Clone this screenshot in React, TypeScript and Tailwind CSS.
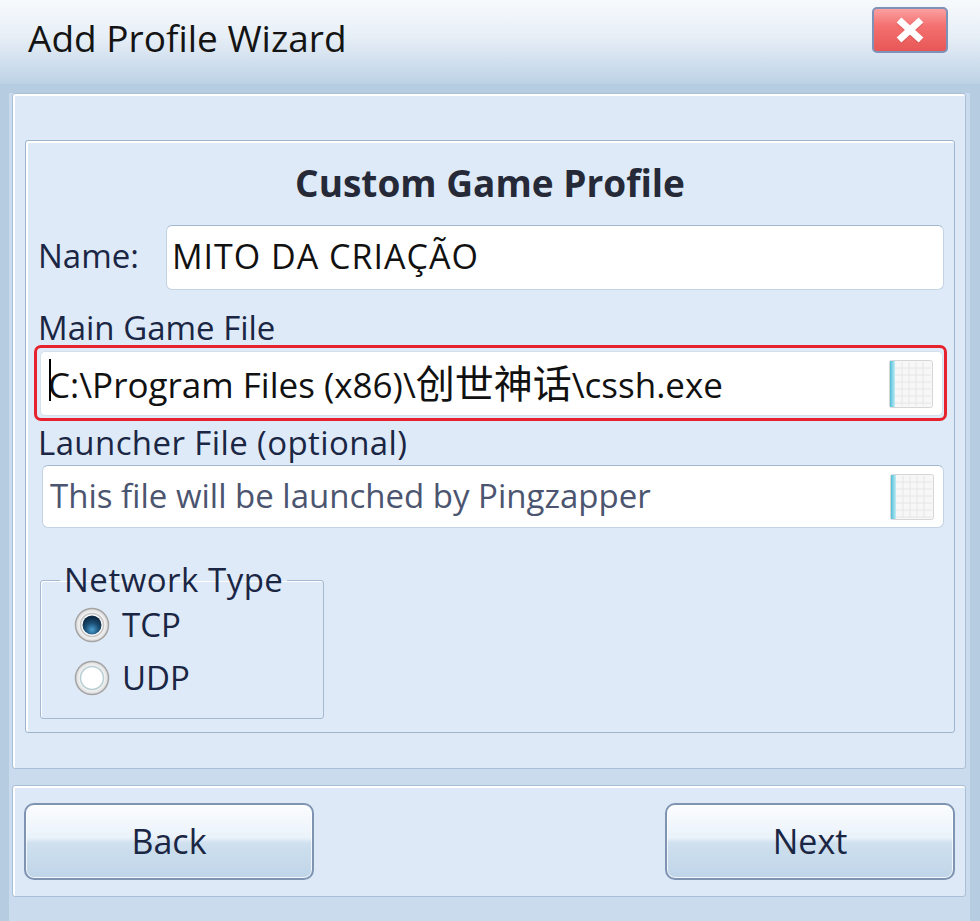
import React from "react";

const BrowseIcon = ({ h, id }: { h: number; id: string }) => {
  const vs = [13, 20, 27, 34];
  const hs: number[] = [];
  for (let y = 8; y < h - 2; y += 7) hs.push(y);
  return (
    <svg width="44" height={h} viewBox={`0 0 44 ${h}`} className="shrink-0">
      <defs>
        <linearGradient id={id} x1="0" y1="0" x2="1" y2="0">
          <stop offset="0" stopColor="#4fbfd9" />
          <stop offset="1" stopColor="#c2ebf3" />
        </linearGradient>
      </defs>
      <rect x="0.5" y="0.5" width="43" height={h - 1} rx="2" fill="#f7f7f7" stroke="#d6d6d6" />
      {vs.map((x) => (
        <line key={"v" + x} x1={x} y1="2" x2={x} y2={h - 2} stroke="#e6e6e6" strokeWidth="1" />
      ))}
      {hs.map((y) => (
        <line key={"h" + y} x1="6" y1={y} x2="42" y2={y} stroke="#e6e6e6" strokeWidth="1" />
      ))}
      <rect x="1" y="1" width="5" height={h - 2} fill={`url(#${id})`} />
    </svg>
  );
};

const Radio = ({ checked, id }: { checked: boolean; id: string }) => (
  <svg width="36" height="36" viewBox="0 0 36 36" className="shrink-0">
    <defs>
      <radialGradient id={id + "o"} cx="50%" cy="50%" r="50%">
        <stop offset="0" stopColor="#ffffff" />
        <stop offset="0.75" stopColor="#f3f3f3" />
        <stop offset="1" stopColor="#d9d9d9" />
      </radialGradient>
      <radialGradient id={id + "d"} cx="50%" cy="75%" r="65%">
        <stop offset="0" stopColor="#4c9fd2" />
        <stop offset="0.55" stopColor="#1b4e76" />
        <stop offset="1" stopColor="#0e2a44" />
      </radialGradient>
    </defs>
    <circle cx="18" cy="18" r="16.5" fill={`url(#${id}o)`} stroke="#a4a4a4" strokeWidth="1.5" />
    <circle cx="18" cy="18" r="11.5" fill="#ffffff" stroke={checked ? "#c4c4c4" : "#b9cfd3"} strokeWidth="1.5" />
    {checked && <circle cx="18" cy="18" r="9.5" fill={`url(#${id}d)`} />}
  </svg>
);

const WinButton = ({ label }: { label: string }) => (
  <div className="w-[290px] h-[77px] rounded-[10px] border-2 border-[#7f94b3] bg-[linear-gradient(180deg,#fbfdff_0%,#eaf2fa_45%,#cfe0ef_52%,#bfd5e8_100%)] shadow-[inset_0_0_0_1px_rgba(255,255,255,0.75)] flex items-center justify-center">
    <span className="text-[34px] leading-[36px] text-[#1a2644] pb-[2px]">{label}</span>
  </div>
);

export default function App() {
  return (
    <div className="w-[980px] h-[921px] flex flex-col bg-[#cadbed] font-['Open_Sans','Noto_Sans','Noto_Sans_CJK_SC',sans-serif] overflow-hidden">
      {/* Title bar */}
      <div className="h-[84px] shrink-0 flex items-start justify-between bg-[linear-gradient(180deg,#f7fafd_0%,#e6eef6_45%,#bdd2e6_100%)]">
        <div className="pl-[28px] pt-[18px] text-[37px] leading-[40px] text-[#141414]">Add Profile Wizard</div>
        <div className="mt-[7px] mr-[32px] w-[76px] h-[46px] rounded-[5px] border-2 border-[#7e91b6] bg-[linear-gradient(180deg,#fba0a0_0%,#f47070_40%,#e85757_100%)] flex items-center justify-center">
          <svg width="30" height="26" viewBox="0 0 30 26">
            <line x1="4" y1="3" x2="26" y2="23" stroke="#b94040" strokeWidth="7.5" opacity="0.35" transform="translate(0 1)" />
            <line x1="26" y1="3" x2="4" y2="23" stroke="#b94040" strokeWidth="7.5" opacity="0.35" transform="translate(0 1)" />
            <line x1="4" y1="3" x2="26" y2="23" stroke="#ffffff" strokeWidth="7" />
            <line x1="26" y1="3" x2="4" y2="23" stroke="#ffffff" strokeWidth="7" />
          </svg>
        </div>
      </div>

      {/* Body */}
      <div className="flex-1 flex flex-col gap-[16px] border-t-[9px] border-l-[9px] border-r-[10px] border-[#b6cce1] pl-[3px] pr-[4px] pb-[24px]">
        {/* Outer panel */}
        <div className="h-[676px] shrink-0 flex flex-col border border-[#a9bfd7] rounded-[3px] bg-[#dde9f6] shadow-[inset_1px_1px_0_1px_#ffffff] pl-[12px] pr-[10px] pt-[46px] pb-[35px]">
          {/* Inner group */}
          <div className="flex-1 flex flex-col border border-[#9fb5cf] rounded-[3px] bg-[#deeaf7] shadow-[inset_1px_1px_0_1px_#ffffff] pr-[10px]">
            <div className="mt-[22px] mr-[-10px] text-center text-[37px] leading-[40px] font-bold text-[#262a38]">Custom Game Profile</div>

            {/* Name row */}
            <div className="mt-[22px] flex items-center">
              <div className="w-[140px] pl-[12px] text-[33px] leading-[34px] text-[#1a2644] pb-[3px]">Name:</div>
              <div className="flex-1 h-[65px] rounded-[6px] bg-white border border-[#c4d3e4] border-t-[#a3b8d0] flex items-center pl-[5px]">
                <span className="text-[34px] leading-[36px] tracking-[1px] text-[#111] pb-[3px]">MITO DA CRIAÇÃO</span>
              </div>
            </div>

            {/* Main game file */}
            <div className="mt-[21px] pl-[12px] text-[33px] leading-[34px] text-[#1a2644]">Main Game File</div>
            <div className="ml-[8px] mr-[-3px] h-[76px] rounded-[7px] border-[3px] border-[#e5222e] pt-[3px] pb-[2px] pl-[3px] pr-[1px] flex">
              <div className="relative flex-1 rounded-[5px] bg-white border border-[#d4e0ec] flex items-center justify-between pl-[7px] pr-[9px]">
                <span className="text-[35px] leading-[38px] text-[#111] whitespace-nowrap">
                  C:\Program Files (x86)\<span className="text-[39px]">创世神话</span>\cssh.exe
                </span>
                <span className="absolute left-[8px] top-[7px] w-[2px] h-[42px] bg-black" />
                <BrowseIcon h={48} id="bi1" />
              </div>
            </div>

            {/* Launcher */}
            <div className="mt-[5px] pl-[12px] text-[33px] leading-[34px] text-[#1a2644] tracking-[0.4px]">Launcher File (optional)</div>
            <div className="mt-[5px] ml-[16px] h-[63px] rounded-[6px] bg-white border border-[#c4d3e4] border-t-[#a3b8d0] flex items-center justify-between pl-[7px] pr-[9px]">
              <span className="text-[33px] leading-[34px] text-[#4c5570] whitespace-nowrap pb-[2px]">This file will be launched by Pingzapper</span>
              <BrowseIcon h={46} id="bi2" />
            </div>

            {/* Network type */}
            <fieldset className="mt-[35px] ml-[14px] w-[284px] h-[156px] border border-[#a5b9d1] rounded-[3px] shadow-[inset_1px_1px_0_0_#ffffff]">
              <legend className="ml-[19px] px-[4px] text-[33px] leading-[34px] text-[#1a2644] tracking-[0.5px]">Network Type</legend>
              <div className="h-[53px] mt-[1px] flex items-center pl-[33px] gap-[12px]">
                <Radio checked id="r1" />
                <span className="text-[33px] leading-[34px] text-[#1a2644]">TCP</span>
              </div>
              <div className="h-[53px] flex items-center pl-[33px] gap-[12px]">
                <Radio checked={false} id="r2" />
                <span className="text-[33px] leading-[34px] text-[#1a2644]">UDP</span>
              </div>
            </fieldset>
          </div>
        </div>

        {/* Button panel */}
        <div className="h-[112px] shrink-0 flex items-start justify-between border border-[#a9bfd7] rounded-[3px] bg-[#dde9f6] shadow-[inset_1px_1px_0_1px_#ffffff] pl-[11px] pr-[10px] pt-[17px]">
          <WinButton label="Back" />
          <WinButton label="Next" />
        </div>
      </div>
    </div>
  );
}
